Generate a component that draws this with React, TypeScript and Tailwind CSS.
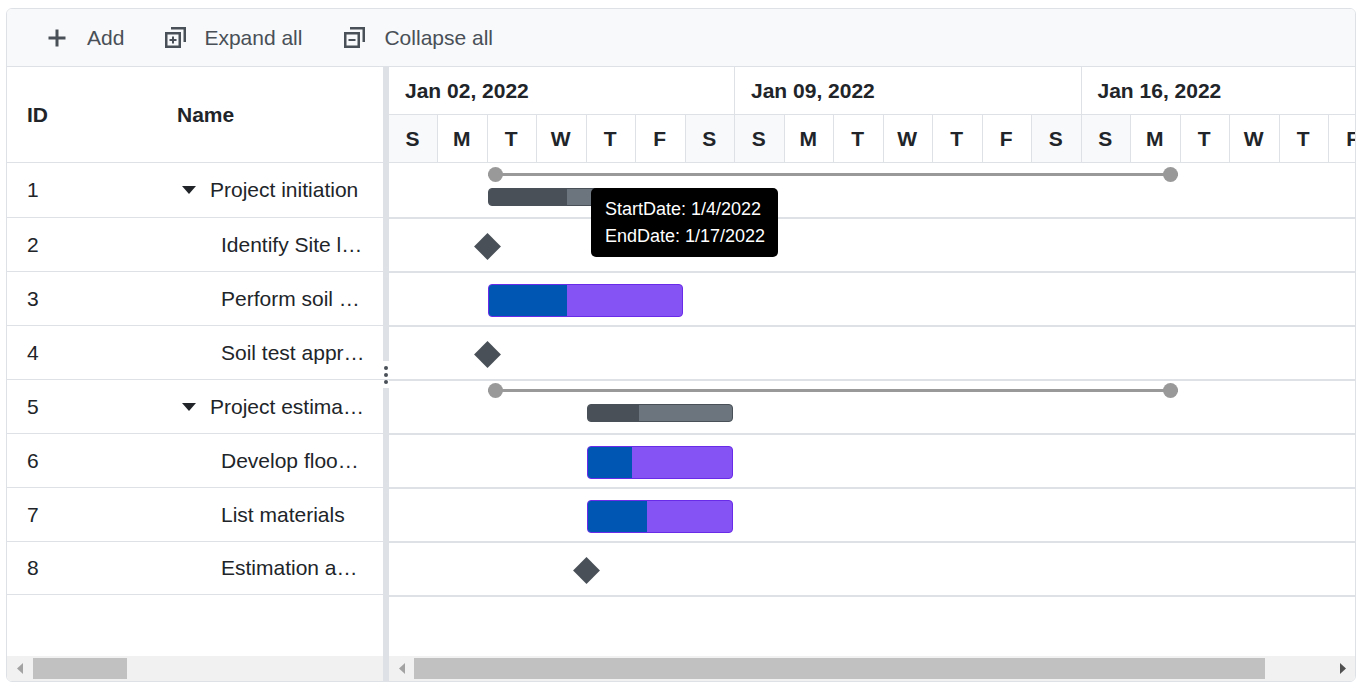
import React from "react";

const tasks = [
  { id: 1, name: "Project initiation", parent: true },
  { id: 2, name: "Identify Site location" },
  { id: 3, name: "Perform soil test" },
  { id: 4, name: "Soil test approval" },
  { id: 5, name: "Project estimation", parent: true },
  { id: 6, name: "Develop floor plan" },
  { id: 7, name: "List materials" },
  { id: 8, name: "Estimation approval" },
];

const weeks = ["Jan 02, 2022", "Jan 09, 2022", "Jan 16, 2022"];
const days = "SMTWTFSSMTWTFSSMTWTF".split("");
const weekend = [0, 6, 7, 13, 14];

const ExpandIcon: React.FC<{ plus?: boolean }> = ({ plus }) => (
  <svg width="21" height="21" viewBox="0 0 21 21" fill="none" stroke="#495057" strokeWidth="2.5">
    <path d="M6 1.25h13.75V15" />
    <rect x="1.25" y="6.25" width="13.5" height="13.5" />
    <path d="M4.5 13h7" strokeWidth="2" />
    {plus && <path d="M8 9.5v7" strokeWidth="2" />}
  </svg>
);

const Summary: React.FC<{ top: number }> = ({ top }) => (
  <div className="absolute left-[99px] w-[690px] h-[15px]" style={{ top }}>
    <div className="absolute left-0 right-0 top-[6px] h-[3px] bg-[#999999]" />
    <div className="absolute left-0 top-0 w-[15px] h-[15px] rounded-full bg-[#999999]" />
    <div className="absolute right-0 top-0 w-[15px] h-[15px] rounded-full bg-[#999999]" />
  </div>
);

const Bar: React.FC<{ left: number; top: number; width: number; progress: number; summary?: boolean }> = ({
  left,
  top,
  width,
  progress,
  summary,
}) => (
  <div
    className={
      summary
        ? "absolute h-[18px] rounded-[4px] border border-[#495057] bg-[#6c757d] overflow-hidden"
        : "absolute h-[33px] rounded-[4px] border border-[#6a2be8] bg-[#8553f4] overflow-hidden"
    }
    style={{ left, top, width }}
  >
    <div className={summary ? "h-full bg-[#495057]" : "h-full bg-[#0056b3]"} style={{ width: progress }} />
  </div>
);

const Milestone: React.FC<{ left: number }> = ({ left }) => (
  <div className="absolute top-[18px] w-[19px] h-[19px] rotate-45 bg-[#495057]" style={{ left }} />
);

const ScrollArrow: React.FC<{ dir: "left" | "right"; color: string }> = ({ dir, color }) => (
  <svg width="6" height="11" viewBox="0 0 6 11" fill={color} className="shrink-0">
    <path d={dir === "left" ? "M6 0v11L0 5.5z" : "M0 0v11l6-5.5z"} />
  </svg>
);

export default function App() {
  return (
    <div className="pt-2 pl-1.5 font-['Liberation_Sans',Arial,sans-serif] text-[21px] text-[#212529]">
      <div className="w-[1350px] h-[674px] flex flex-col border border-[#dee2e6] rounded-[6px] overflow-hidden bg-white">
        {/* toolbar */}
        <div className="h-[58px] shrink-0 flex items-center pl-[40px] bg-[#f8f9fa] border-b border-[#dee2e6] text-[#495057]">
          <svg width="20" height="20" viewBox="0 0 20 20" stroke="#495057" strokeWidth="3" className="mr-[20px]">
            <path d="M10 1.5v17M1.5 10h17" />
          </svg>
          <span className="mr-[41px]">Add</span>
          <ExpandIcon plus />
          <span className="ml-[18px] mr-[42px]">Expand all</span>
          <ExpandIcon />
          <span className="ml-[19px]">Collapse all</span>
        </div>

        <div className="flex-1 flex min-h-0">
          {/* tree grid */}
          <div className="w-[376px] shrink-0 flex flex-col">
            <div className="h-[96px] shrink-0 flex items-center font-bold border-b border-[#dee2e6]">
              <div className="w-[150px] pl-5">ID</div>
              <div className="pl-5">Name</div>
            </div>
            <div className="flex-1">
              {tasks.map((t, i) => (
                <div
                  key={t.id}
                  className={
                    "flex items-center border-b border-[#dee2e6] " +
                    (i === 0 ? "h-[55px]" : i === 7 ? "h-[53px]" : "h-[54px]")
                  }
                >
                  <div className="w-[150px] shrink-0 pl-5">{t.id}</div>
                  {t.parent ? (
                    <div className="flex items-center min-w-0 pl-[25px] pr-[18px]">
                      <span className="shrink-0 mr-[14px] w-0 h-0 border-x-[7.5px] border-x-transparent border-t-[8px] border-t-[#212529]" />
                      <span className="truncate">{t.name}</span>
                    </div>
                  ) : (
                    <div className="min-w-0 pl-[64px] pr-[18px] truncate">{t.name}</div>
                  )}
                </div>
              ))}
            </div>
            <div className="h-[25px] shrink-0 flex items-center pl-[10px] bg-[#f1f1f1]">
              <ScrollArrow dir="left" color="#a3a3a3" />
              <div className="ml-[10px] w-[94px] h-[21px] bg-[#c1c1c1]" />
            </div>
          </div>

          {/* splitter */}
          <div className="relative w-[6px] shrink-0 bg-[#dee2e6]">
            <div className="absolute left-0 top-[294px] w-[6px] h-[27px] bg-white flex flex-col items-center justify-center gap-[3px]">
              <span className="w-1 h-1 rounded-full bg-[#495057]" />
              <span className="w-1 h-1 rounded-full bg-[#495057]" />
              <span className="w-1 h-1 rounded-full bg-[#495057]" />
            </div>
            <div className="absolute left-0 top-[312px] w-[6px] h-px bg-[#dee2e6]" />
          </div>

          {/* chart */}
          <div className="flex-1 min-w-0 flex flex-col overflow-hidden">
            <div className="h-[96px] shrink-0 flex flex-col border-b border-[#dee2e6] font-bold">
              <div className="h-[48px] shrink-0 flex border-b border-[#dee2e6]">
                {weeks.map((w, i) => (
                  <div
                    key={w}
                    className={
                      "shrink-0 flex items-center pl-4 border-r border-[#dee2e6] " +
                      (i === 0 ? "w-[346px]" : "w-[346.5px]")
                    }
                  >
                    {w}
                  </div>
                ))}
              </div>
              <div className="flex-1 flex">
                {days.map((d, i) => (
                  <div
                    key={i}
                    className={
                      "shrink-0 flex items-center justify-center pr-px border-r border-[#dee2e6] " +
                      (i === 0 ? "w-[49px] " : "w-[49.5px] ") +
                      (weekend.includes(i) ? "bg-[#f8f9fa]" : "")
                    }
                  >
                    {d}
                  </div>
                ))}
              </div>
            </div>

            <div className="relative flex-1">
              {tasks.map((t, i) => (
                <div key={t.id} className={"relative border-b-2 border-[#dee2e6] " + (i === 0 ? "h-[56px]" : "h-[54px]")}>
                  {i === 0 && (
                    <>
                      <Summary top={4} />
                      <Bar summary left={99} top={25} width={195} progress={78} />
                    </>
                  )}
                  {i === 1 && <Milestone left={89} />}
                  {i === 2 && <Bar left={99} top={11} width={195} progress={78} />}
                  {i === 3 && <Milestone left={89} />}
                  {i === 4 && (
                    <>
                      <Summary top={2} />
                      <Bar summary left={198} top={23} width={146} progress={51} />
                    </>
                  )}
                  {i === 5 && <Bar left={198} top={11} width={146} progress={44} />}
                  {i === 6 && <Bar left={198} top={11} width={146} progress={59} />}
                  {i === 7 && <Milestone left={188} />}
                </div>
              ))}
              <div className="absolute left-[202px] top-[25px] w-[187px] h-[69px] rounded-[5px] bg-black text-white text-[18px] leading-[27px] pl-[14px] pt-[8px] whitespace-nowrap">
                <div>StartDate: 1/4/2022</div>
                <div>EndDate: 1/17/2022</div>
              </div>
            </div>

            <div className="h-[25px] shrink-0 flex items-center pl-[10px] pr-[9px] bg-[#f1f1f1]">
              <ScrollArrow dir="left" color="#a3a3a3" />
              <div className="ml-[9px] w-[851px] h-[21px] bg-[#c1c1c1]" />
              <div className="flex-1" />
              <ScrollArrow dir="right" color="#505050" />
            </div>
          </div>
        </div>
      </div>
    </div>
  );
}
